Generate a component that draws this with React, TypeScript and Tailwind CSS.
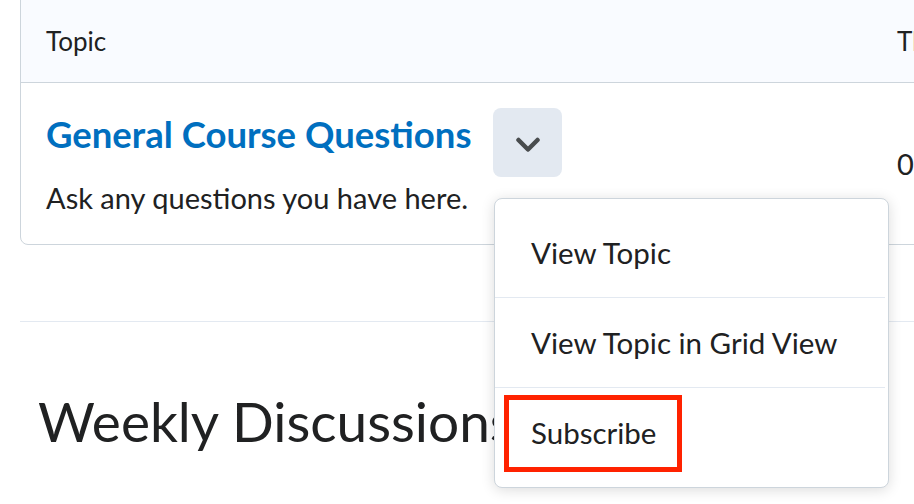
import React from "react";

export default function App() {
  return (
    <div className="relative w-[914px] h-[504px] overflow-hidden bg-white text-[#202122] font-['Lato',sans-serif]">
      <div className="pl-[20px]">
        <div className="-mt-[8px] w-[1000px] border border-[#cdd5dc] rounded-[8px] overflow-hidden">
          <div className="flex h-[90px] items-center bg-[#f9fbff] border-b border-[#cdd5dc] pt-[8px]">
            <div className="w-[876px] shrink-0 pl-[25px] text-[26px]">Topic</div>
            <div className="text-[26px] whitespace-nowrap">Threads</div>
          </div>
          <div className="flex h-[161px] pt-[25px]">
            <div className="w-[876px] shrink-0 pl-[25px]">
              <div className="flex items-start gap-[22px]">
                <a className="mt-[6px] text-[36.5px] leading-[40px] font-bold text-[#006fbf] whitespace-nowrap">General Course Questions</a>
                <button className="w-[69px] h-[69px] shrink-0 rounded-[8px] bg-[#e3e9f1] flex items-center justify-center pt-[4px]">
                  <svg width="26" height="16" viewBox="0 0 26 16" fill="none">
                    <path d="M3.5 3 L13 12.5 L22.5 3" stroke="#494c4e" strokeWidth="4.5" strokeLinecap="round" strokeLinejoin="round" />
                  </svg>
                </button>
              </div>
              <div className="mt-[5px] text-[29px] leading-[32px] whitespace-nowrap">Ask any questions you have here.</div>
            </div>
            <div className="pt-[40px] text-[29px] leading-[32px]">0</div>
          </div>
        </div>
      </div>
      <div className="ml-[20px] mt-[76px] h-px bg-[#e3e9f1]" />
      <h2 className="ml-[38px] mt-[71px] text-[55px] leading-[57px] font-normal whitespace-nowrap">Weekly Discussions</h2>

      <div className="absolute left-[494px] top-[198px] w-[395px] h-[290px] bg-white border border-[#cdd5dc] rounded-[8px] shadow-[0_2px_14px_rgba(0,0,0,0.14)] flex flex-col">
        <div className="h-[99px] flex items-center pl-[36px] pt-[10px] text-[29.5px] border-b border-[#e3e9f1] mr-[3px]">View Topic</div>
        <div className="h-[90px] flex items-center pl-[36px] pt-[2px] text-[29.5px] border-b border-[#e3e9f1] mr-[3px]">View Topic in Grid View</div>
        <div className="flex-1 pl-[9px] pt-[7px]">
          <div className="w-[178px] h-[77px] border-[5px] border-[#ff2200] flex items-center pl-[22px] text-[29.5px]">Subscribe</div>
        </div>
      </div>
    </div>
  );
}
